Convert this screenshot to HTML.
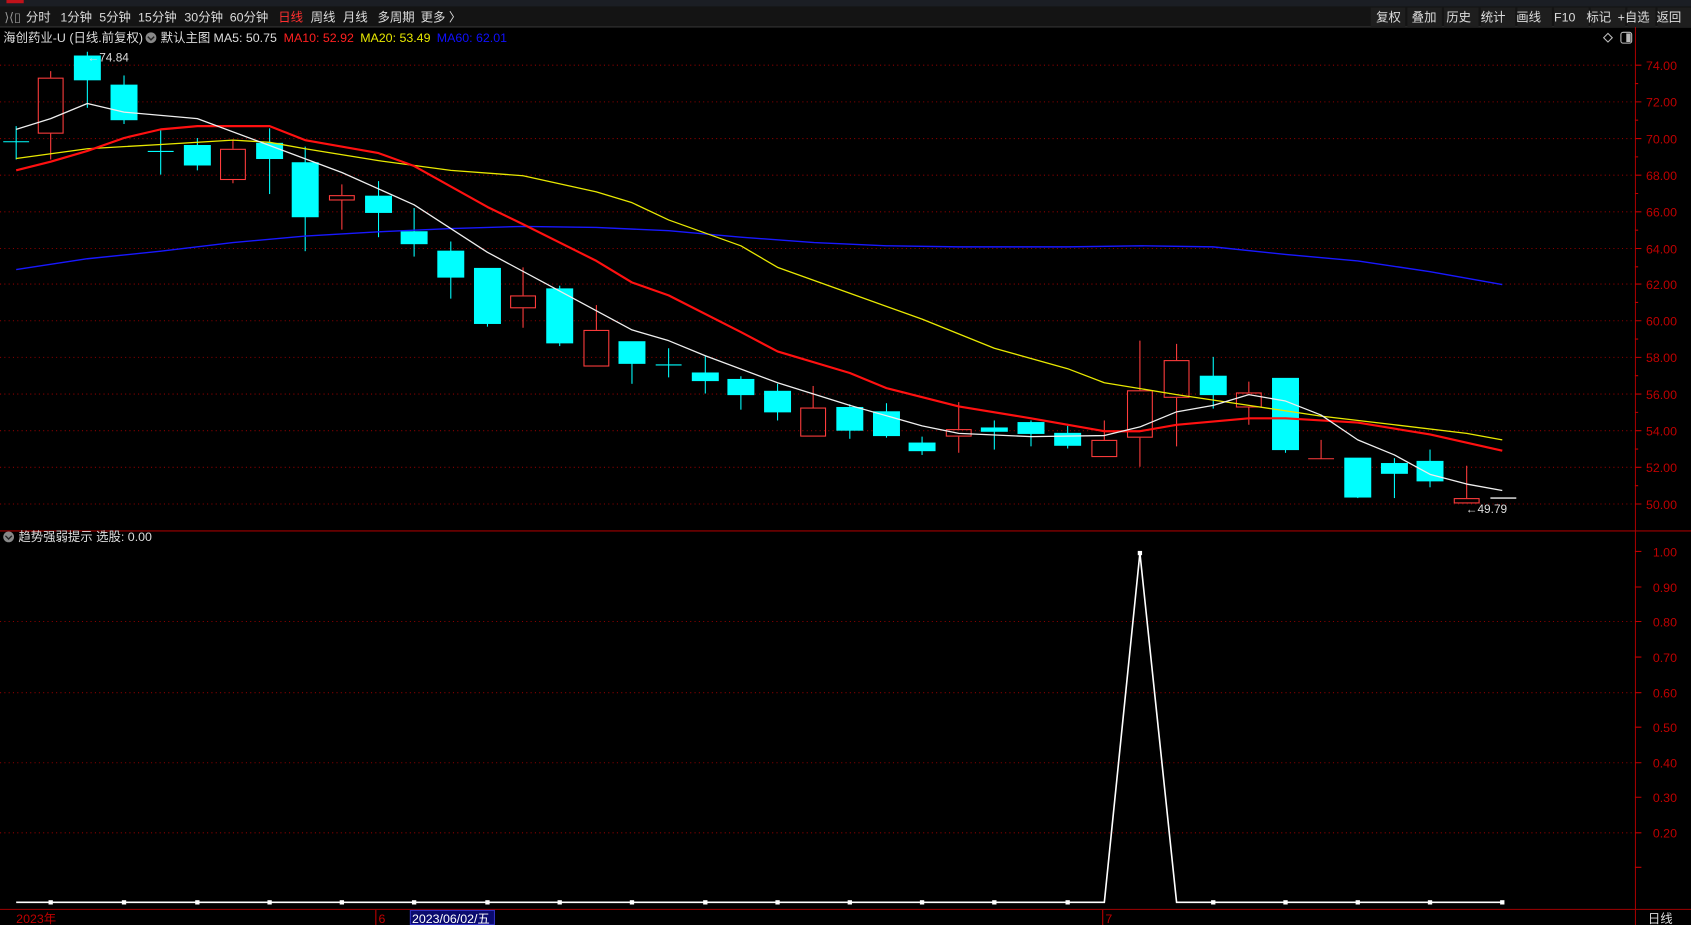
<!DOCTYPE html>
<html><head><meta charset="utf-8"><style>
html,body{margin:0;padding:0;background:#000;overflow:hidden}
svg{display:block}
text{font-family:"Liberation Sans","Noto Sans CJK SC",sans-serif}
</style></head><body>
<svg width="1691" height="925" viewBox="0 0 1568 858" preserveAspectRatio="none" xmlns="http://www.w3.org/2000/svg">
<rect width="1568" height="858" fill="#000"/>
<rect x="0" y="0" width="1568" height="6" fill="#1b1e24"/>
<rect x="6" y="0" width="16" height="3" fill="#c0121a"/>
<rect x="0" y="6" width="1568" height="19" fill="#141414"/>
<line x1="0" y1="25" x2="1568" y2="25" stroke="#333" stroke-width="1"/>
<g font-size="11.5" fill="#ddd">
<text x="4" y="20" fill="#999">⟩⟨▯</text>
<text x="24" y="20">分时</text><text x="56" y="20">1分钟</text><text x="92" y="20">5分钟</text><text x="128" y="20">15分钟</text><text x="171" y="20">30分钟</text><text x="213" y="20">60分钟</text>
<text x="258" y="20" fill="#ff3030">日线</text><text x="288" y="20">周线</text><text x="318" y="20">月线</text><text x="350" y="20">多周期</text><text x="390" y="20">更多 〉</text>
</g>
<g font-size="11.5" fill="#ddd">
<rect x="1271" y="7" width="32" height="18" fill="#1e1e1e"/><text x="1276" y="20">复权</text>
<rect x="1305" y="7" width="32" height="18" fill="#1e1e1e"/><text x="1309" y="20">叠加</text>
<rect x="1339" y="7" width="32" height="18" fill="#1e1e1e"/><text x="1341" y="20">历史</text>
<rect x="1373" y="7" width="32" height="18" fill="#1e1e1e"/><text x="1373" y="20">统计</text>
<rect x="1407" y="7" width="32" height="18" fill="#1e1e1e"/><text x="1406" y="20">画线</text>
<rect x="1441" y="7" width="32" height="18" fill="#1e1e1e"/><text x="1441" y="20">F10</text>
<rect x="1475" y="7" width="32" height="18" fill="#1e1e1e"/><text x="1471" y="20">标记</text>
<rect x="1509" y="7" width="26" height="18" fill="#1e1e1e"/><text x="1500" y="20">+自选</text>
<rect x="1537" y="7" width="31" height="18" fill="#1e1e1e"/><text x="1536" y="20">返回</text>
</g>
<g font-size="11.5">
<text x="3" y="39" fill="#ddd">海创药业-U (日线.前复权)</text>
<circle cx="140" cy="35" r="5" fill="#888"/><path d="M137 34 L140 37 L143 34" stroke="#222" stroke-width="1.3" fill="none"/>
<text x="149" y="39" fill="#ddd">默认主图</text>
<text x="198" y="39" fill="#ddd">MA5: 50.75</text>
<text x="263" y="39" fill="#ff2020">MA10: 52.92</text>
<text x="334" y="39" fill="#e8e800">MA20: 53.49</text>
<text x="405" y="39" fill="#1010ff">MA60: 62.01</text>
</g>
<path d="M1491 31 L1495 35 L1491 39 L1487 35Z" stroke="#bbb" fill="none"/>
<rect x="1503" y="30" width="10" height="10" rx="2" stroke="#bbb" fill="none"/><rect x="1508" y="31" width="4" height="8" fill="#bbb"/>
<!-- axes -->
<line x1="1516.5" y1="25" x2="1516.5" y2="858" stroke="#a00000"/>
<line x1="0" y1="492.5" x2="1568" y2="492.5" stroke="#a00000"/>
<line x1="0" y1="843.5" x2="1568" y2="843.5" stroke="#a00000"/>
<g stroke="#8a0000" stroke-dasharray="1,3">
<line x1="0" y1="60.5" x2="1516" y2="60.5"/><line x1="0" y1="94.5" x2="1516" y2="94.5"/><line x1="0" y1="128.5" x2="1516" y2="128.5"/><line x1="0" y1="162.5" x2="1516" y2="162.5"/><line x1="0" y1="196.5" x2="1516" y2="196.5"/><line x1="0" y1="230.5" x2="1516" y2="230.5"/><line x1="0" y1="263.5" x2="1516" y2="263.5"/><line x1="0" y1="297.5" x2="1516" y2="297.5"/><line x1="0" y1="331.5" x2="1516" y2="331.5"/><line x1="0" y1="365.5" x2="1516" y2="365.5"/><line x1="0" y1="399.5" x2="1516" y2="399.5"/><line x1="0" y1="433.5" x2="1516" y2="433.5"/><line x1="0" y1="467.5" x2="1516" y2="467.5"/>
<line x1="0" y1="576.5" x2="1516" y2="576.5"/><line x1="0" y1="642.5" x2="1516" y2="642.5"/><line x1="0" y1="707.5" x2="1516" y2="707.5"/><line x1="0" y1="772.5" x2="1516" y2="772.5"/>
</g>
<g font-size="11.5" fill="#c00000" text-anchor="end">
<text x="1555" y="65">74.00</text><text x="1555" y="99">72.00</text><text x="1555" y="133">70.00</text><text x="1555" y="167">68.00</text><text x="1555" y="201">66.00</text><text x="1555" y="235">64.00</text><text x="1555" y="268">62.00</text><text x="1555" y="302">60.00</text><text x="1555" y="336">58.00</text><text x="1555" y="370">56.00</text><text x="1555" y="404">54.00</text><text x="1555" y="438">52.00</text><text x="1555" y="472">50.00</text>
<text x="1555" y="516">1.00</text><text x="1555" y="549">0.90</text><text x="1555" y="581">0.80</text><text x="1555" y="614">0.70</text><text x="1555" y="647">0.60</text><text x="1555" y="679">0.50</text><text x="1555" y="712">0.40</text><text x="1555" y="744">0.30</text><text x="1555" y="777">0.20</text>
</g>
<g stroke="#c00000">
<path d="M1516 60.5h6M1516 94.5h6M1516 128.5h6M1516 162.5h6M1516 196.5h6M1516 230.5h6M1516 263.5h6M1516 297.5h6M1516 331.5h6M1516 365.5h6M1516 399.5h6M1516 433.5h6M1516 467.5h6M1516 77.5h3M1516 111.5h3M1516 145.5h3M1516 179.5h3M1516 213.5h3M1516 247.5h3M1516 280.5h3M1516 314.5h3M1516 348.5h3M1516 382.5h3M1516 416.5h3M1516 450.5h3"/>
<path d="M1516 511.5h6M1516 544.5h6M1516 576.5h6M1516 609.5h6M1516 642.5h6M1516 674.5h6M1516 707.5h6M1516 739.5h6M1516 772.5h6M1516 804.5h6"/>
</g>
<!-- candles -->
<g stroke="#00ffff" fill="#00ffff">
<path d="M15 117V148M3 131.5h24" fill="none"/>
<path d="M81 48V100"/><rect x="69" y="52" width="24" height="22"/>
<path d="M115 70V115"/><rect x="103" y="79" width="24" height="32"/>
<path d="M149 120V162M137 140.5h24" fill="none"/>
<path d="M183 128V158"/><rect x="171" y="135" width="24" height="18"/>
<path d="M250 119V180"/><rect x="238" y="133" width="24" height="14"/>
<path d="M283 136V233"/><rect x="271" y="151" width="24" height="50"/>
<path d="M351 168V220"/><rect x="339" y="182" width="24" height="15"/>
<path d="M384 193V238"/><rect x="372" y="215" width="24" height="11"/>
<path d="M418 224V277"/><rect x="406" y="233" width="24" height="24"/>
<path d="M452 249V303"/><rect x="440" y="249" width="24" height="51"/>
<path d="M519 265V321"/><rect x="507" y="268" width="24" height="50"/>
<path d="M586 317V356"/><rect x="574" y="317" width="24" height="20"/>
<path d="M620 323V350M608 338.5h24" fill="none"/>
<path d="M654 330V365"/><rect x="642" y="346" width="24" height="7"/>
<path d="M687 349V380"/><rect x="675" y="352" width="24" height="14"/>
<path d="M721 356V390"/><rect x="709" y="363" width="24" height="19"/>
<path d="M788 375V407"/><rect x="776" y="378" width="24" height="21"/>
<path d="M822 374V406"/><rect x="810" y="382" width="24" height="22"/>
<path d="M855 405V422"/><rect x="843" y="411" width="24" height="7"/>
<path d="M922 390V417"/><rect x="910" y="397" width="24" height="3"/>
<path d="M956 390V414"/><rect x="944" y="392" width="24" height="10"/>
<path d="M990 395V416"/><rect x="978" y="402" width="24" height="11"/>
<path d="M1125 331V379"/><rect x="1113" y="349" width="24" height="17"/>
<path d="M1192 351V420"/><rect x="1180" y="351" width="24" height="66"/>
<path d="M1259 425V462"/><rect x="1247" y="425" width="24" height="36"/>
<path d="M1293 425V462"/><rect x="1281" y="430" width="24" height="9"/>
<path d="M1326 417V452"/><rect x="1314" y="428" width="24" height="18"/>
</g>
<g stroke="#ff3c3c" fill="none">
<path d="M47 66V72M47 124V148"/><rect x="35.5" y="72.5" width="23" height="51"/>
<path d="M216 130V138M216 167V170"/><rect x="204.5" y="138.5" width="23" height="28"/>
<path d="M317 171V181M317 186V213"/><rect x="305.5" y="181.5" width="23" height="4"/>
<path d="M485 248V274M485 286V304"/><rect x="473.5" y="274.5" width="23" height="11"/>
<path d="M553 283V306"/><rect x="541.5" y="306.5" width="23" height="33"/>
<path d="M754 358V378"/><rect x="742.5" y="378.5" width="23" height="26"/>
<path d="M889 373V398M889 405V420"/><rect x="877.5" y="398.5" width="23" height="6"/>
<path d="M1024 390V408"/><rect x="1012.5" y="408.5" width="23" height="15"/>
<path d="M1057 316V362M1057 406V433"/><rect x="1045.5" y="362.5" width="23" height="43"/>
<path d="M1091 319V334M1091 369V414"/><rect x="1079.5" y="334.5" width="23" height="34"/>
<path d="M1158 354V364M1158 378V394"/><rect x="1146.5" y="364.5" width="23" height="13"/>
<path d="M1225 408V425M1213 425.5h24"/>
<path d="M1360 432V462"/><rect x="1348.5" y="462.5" width="23" height="4"/>
</g>
<!-- MAs -->
<g fill="none" stroke-linejoin="round">
<polyline stroke="#1818ff" stroke-width="1.3" points="15,250 81,240 149,233 216,225 283,219 351,215 418,212 485,210 553,211 620,214 687,220 755,225 822,228 889,229 990,229 1057,228 1125,229 1192,236 1259,242 1326,252 1393,264"/>
<polyline stroke="#e8e800" stroke-width="1.2" points="15,147 81,138 149,134 216,130 250,132 283,138 351,149 418,158 485,163 553,178 586,188 620,204 687,228 721,248 788,272 855,296 922,323 990,342 1024,355 1091,366 1158,376 1225,386 1293,394 1360,402 1393,408"/>
<polyline stroke="#ff1010" stroke-width="2" points="15,158 47,150 81,140 115,128 149,120 183,117 250,117 283,130 351,142 384,154 452,192 485,208 553,242 586,262 620,274 687,308 721,326 788,346 822,360 889,377 956,388 1024,400 1057,400 1091,394 1158,388 1192,388 1259,392 1326,403 1393,418"/>
<polyline stroke="#eee" stroke-width="1.2" points="15,120 47,110 81,96 115,104 183,110 250,135 317,160 384,190 418,212 452,234 519,270 586,306 620,316 654,330 721,355 788,376 855,395 889,402 956,405 1024,404 1057,396 1091,382 1125,376 1158,366 1192,372 1225,385 1259,408 1293,422 1326,440 1360,449 1393,455"/>
<line x1="1382" y1="462" x2="1406" y2="462" stroke="#eee" stroke-width="1.2"/>
</g>
<g font-size="11" fill="#ddd">
<text x="81" y="57">←74.84</text>
<text x="1359" y="476">←49.79</text>
</g>
<!-- lower -->
<circle cx="8" cy="498" r="5" fill="#888"/><path d="M5 497 L8 500 L11 497" stroke="#222" stroke-width="1.3" fill="none"/>
<text x="17" y="502" font-size="11.5" fill="#ddd">趋势强弱提示 选股: 0.00</text>
<polyline fill="none" stroke="#fff" stroke-width="1.5" points="15,837 1024,837 1057,513 1091,837 1393,837"/>
<g fill="#fff">
<rect x="45" y="835" width="4" height="4"/><rect x="113" y="835" width="4" height="4"/><rect x="181" y="835" width="4" height="4"/><rect x="248" y="835" width="4" height="4"/><rect x="315" y="835" width="4" height="4"/><rect x="382" y="835" width="4" height="4"/><rect x="450" y="835" width="4" height="4"/><rect x="517" y="835" width="4" height="4"/><rect x="584" y="835" width="4" height="4"/><rect x="652" y="835" width="4" height="4"/><rect x="719" y="835" width="4" height="4"/><rect x="786" y="835" width="4" height="4"/><rect x="853" y="835" width="4" height="4"/><rect x="920" y="835" width="4" height="4"/><rect x="988" y="835" width="4" height="4"/><rect x="1055" y="511" width="4" height="4"/><rect x="1123" y="835" width="4" height="4"/><rect x="1190" y="835" width="4" height="4"/><rect x="1257" y="835" width="4" height="4"/><rect x="1324" y="835" width="4" height="4"/><rect x="1391" y="835" width="4" height="4"/>
</g>
<!-- bottom axis -->
<g font-size="11.5">
<text x="15" y="856" fill="#c00000">2023年</text>
<line x1="348.5" y1="844" x2="348.5" y2="858" stroke="#c00000"/>
<text x="351" y="856" fill="#c00000">6</text>
<rect x="380.5" y="844.5" width="78" height="13" fill="#0a0a6e" stroke="#3030c0"/>
<text x="382" y="856" fill="#fff">2023/06/02/五</text>
<line x1="1022.5" y1="844" x2="1022.5" y2="858" stroke="#c00000"/>
<text x="1025" y="856" fill="#c00000">7</text>
<text x="1528" y="856" fill="#ddd">日线</text>
</g>
</svg>
</body></html>
